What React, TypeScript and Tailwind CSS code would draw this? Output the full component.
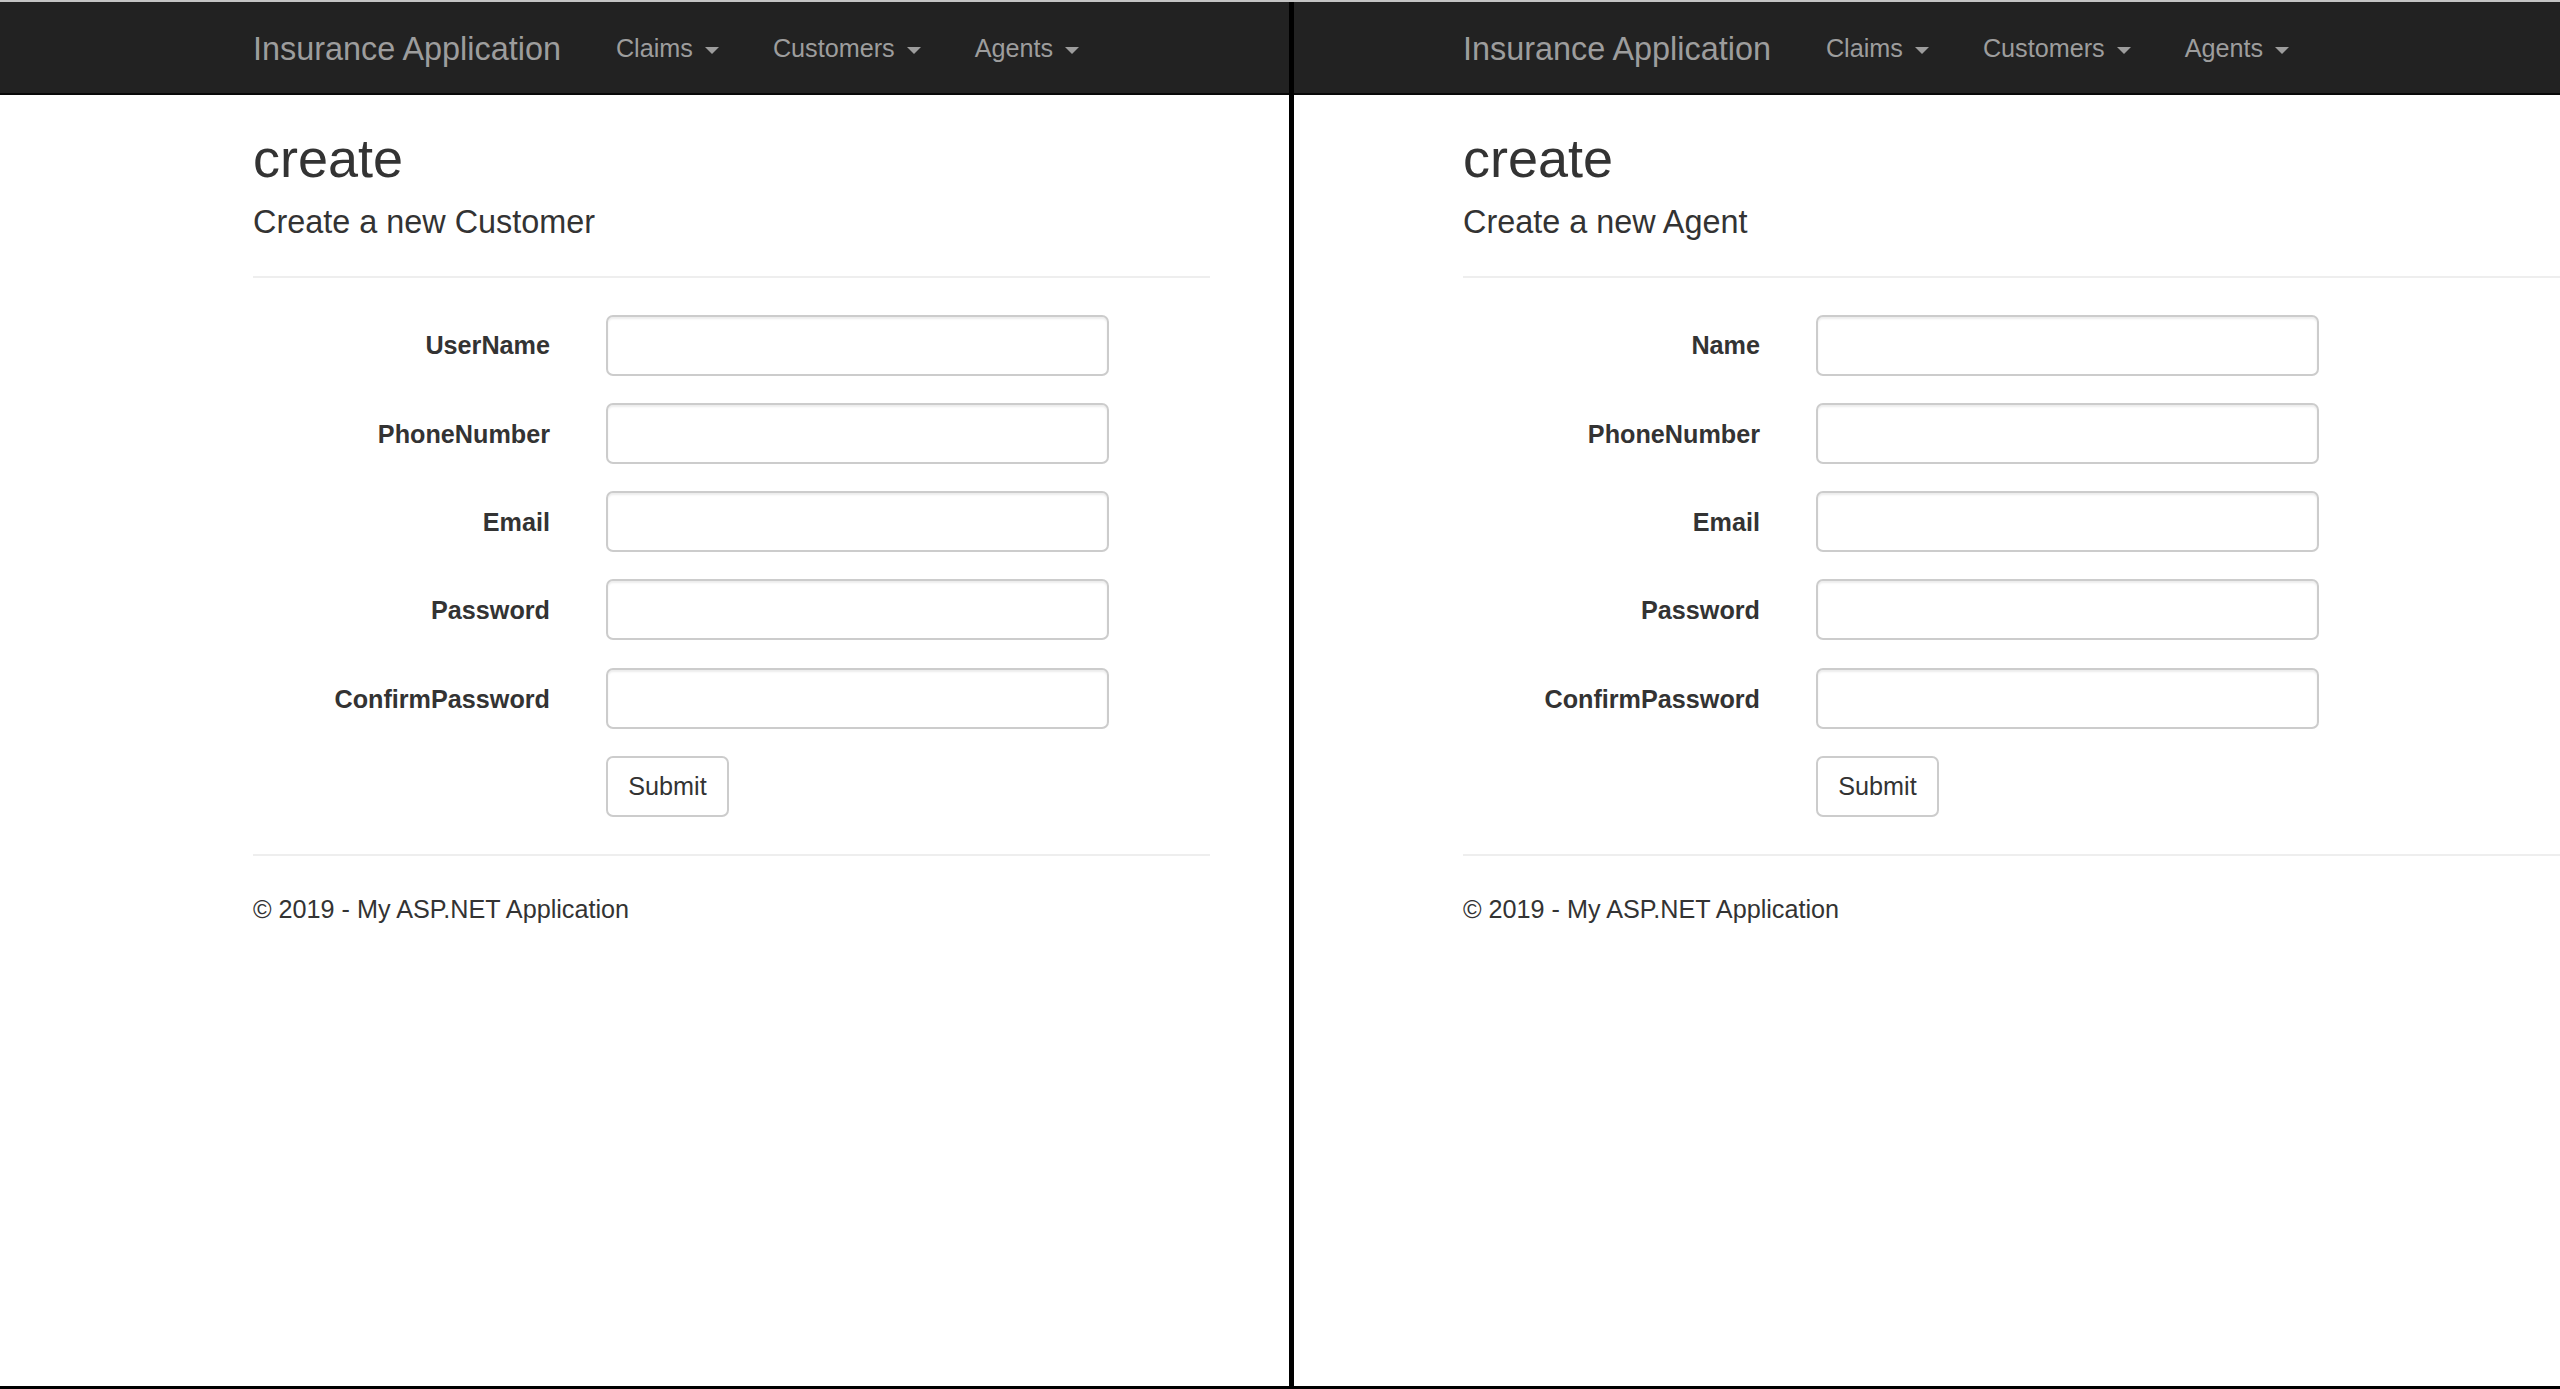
const font = "font-['Liberation_Sans',Arial,Helvetica,sans-serif]";

function Caret() {
  return (
    <span className="mt-[4px] inline-block h-0 w-0 border-x-[7px] border-t-[7px] border-x-transparent border-t-[#9d9d9d]" />
  );
}

function NavBar({ offset }: { offset: string }) {
  const links = ['Claims', 'Customers', 'Agents'];
  return (
    <div className="h-[93px] border-b-2 border-[#080808] bg-[#222222] pt-[3px]">
      <div className={`flex h-full items-center ${offset}`}>
        <a className="mr-[55px] whitespace-nowrap text-[32.4px] leading-none text-[#9d9d9d]">Insurance Application</a>
        <ul className="flex items-center gap-[54px]">
          {links.map((l) => (
            <li key={l} className="flex items-center gap-[12px] whitespace-nowrap text-[25.2px] leading-none text-[#9d9d9d]">
              {l}
              <Caret />
            </li>
          ))}
        </ul>
      </div>
    </div>
  );
}

function Field({ label }: { label: string }) {
  return (
    <div className="flex h-[61px] items-center">
      <label className="w-[297px] shrink-0 pt-[2px] text-right text-[25.2px] font-bold leading-none text-[#333333]">{label}</label>
      <input
        type="text"
        className="ml-[56px] h-[61px] w-[503px] shrink-0 rounded-[7px] border-2 border-[#cccccc] bg-white shadow-[inset_0_2px_2px_rgba(0,0,0,0.075)] outline-none"
      />
    </div>
  );
}

type PanelProps = {
  subtitle: string;
  firstLabel: string;
  offset: string;
  width: string;
  panelWidth: string;
};

function Panel({ subtitle, firstLabel, offset, width, panelWidth }: PanelProps) {
  const labels = [firstLabel, 'PhoneNumber', 'Email', 'Password', 'ConfirmPassword'];
  return (
    <div className={`flex flex-col overflow-hidden bg-white ${panelWidth}`}>
      <NavBar offset={offset} />
      <div className={`${offset} ${width} text-[#333333]`}>
        <h2 className="mt-[33px] text-[54px] font-normal leading-[60px]">create</h2>
        <h4 className="mt-[16px] text-[32.4px] font-normal leading-[36px]">{subtitle}</h4>
        <hr className="mt-[35.5px] border-t-2 border-[#eeeeee]" />
        <form className="mt-[37px] flex flex-col gap-[27.3px]">
          {labels.map((l) => (
            <Field key={l} label={l} />
          ))}
          <div className="flex h-[61px] items-center">
            <div className="w-[297px] shrink-0" />
            <button
              type="button"
              className="ml-[56px] flex h-[61px] w-[123px] items-center justify-center rounded-[7px] border-2 border-[#cccccc] bg-white pt-[1px] text-[25.2px] leading-none text-[#333333]"
            >
              Submit
            </button>
          </div>
        </form>
        <hr className="mt-[37px] border-t-2 border-[#eeeeee]" />
        <footer className="mt-[35.5px] whitespace-nowrap text-[25.2px] leading-[36px]">© 2019 - My ASP.NET Application</footer>
      </div>
    </div>
  );
}

export default function App() {
  return (
    <div className={`flex h-[1389px] w-[2560px] flex-col overflow-hidden bg-white ${font}`}>
      <div className="h-[2px] bg-[#c4c4c4]" />
      <div className="flex min-h-0 flex-1">
        <Panel subtitle="Create a new Customer" firstLabel="UserName" offset="ml-[253px]" width="w-[957px]" panelWidth="w-[1289px] shrink-0" />
        <div className="w-[5px] shrink-0 bg-black" />
        <Panel subtitle="Create a new Agent" firstLabel="Name" offset="ml-[169px]" width="w-auto" panelWidth="flex-1 min-w-0" />
      </div>
      <div className="h-[3px] bg-black" />
    </div>
  );
}
